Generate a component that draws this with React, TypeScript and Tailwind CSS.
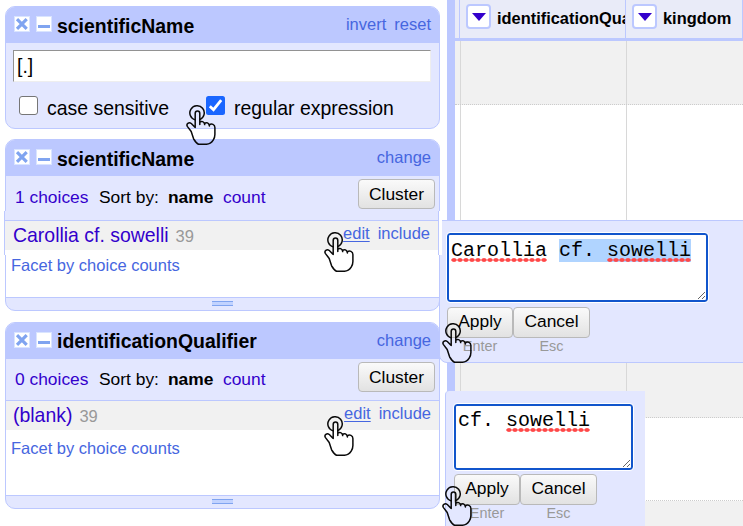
import type { ReactNode } from "react";

function TitleIcon({ kind }: { kind: "close" | "minimize" }) {
  return (
    <svg width="16" height="16" viewBox="0 0 16 16" className="shrink-0">
      <rect x="0.5" y="0.5" width="15" height="15" fill="#fff" stroke="#d9e4ff" />
      {kind === "close" ? (
        <path d="M3 3.2 L12.7 12.8 M12.7 3.2 L3 12.8" stroke="#80a4f0" strokeWidth="3.2" />
      ) : (
        <path d="M2 10.5 H14" stroke="#80a4f0" strokeWidth="2.8" />
      )}
    </svg>
  );
}

function FacetHeader({ title, links, className, titleClass }: { title: string; links: string[]; className: string; titleClass: string }) {
  return (
    <div className={`flex justify-between bg-[#bcc8ff] pl-2 pr-2 ${className}`}>
      <div className="flex">
        <div className="mt-[9px] flex gap-[6px]">
          <TitleIcon kind="close" />
          <TitleIcon kind="minimize" />
        </div>
        <h2 className={`ml-[5px] text-[19.45px] font-bold leading-6 ${titleClass}`}>{title}</h2>
      </div>
      <div className="mt-[6px] flex gap-[8px] text-[16.5px] leading-[22px] text-[#4666e0]">
        {links.map((l) => (
          <a key={l}>{l}</a>
        ))}
      </div>
    </div>
  );
}

function Button({ children, className }: { children: ReactNode; className: string }) {
  return (
    <button
      className={`box-border shrink-0 rounded-[4px] border border-[#b9b9b9] bg-linear-to-b from-[#fafafa] to-[#e2e2e2] text-center text-[17.4px] ${className}`}
    >
      {children}
    </button>
  );
}

type FacetProps = {
  title: string;
  choices: string;
  value: string;
  panelClass: string;
  headerClass: string;
  titleClass: string;
  sortClass: string;
  buttonClass: string;
  rowClass: string;
  footClass: string;
};

function ListFacet(p: FacetProps) {
  return (
    <section className={`flex w-[435px] flex-col overflow-hidden rounded-[10px] border border-[#bcc8ff] bg-[#e3e7ff] ${p.panelClass}`}>
      <FacetHeader title={p.title} links={["change"]} className={p.headerClass} titleClass={p.titleClass} />
      <div className={`flex justify-between border-b border-[#bcc8ff] pl-[9px] pr-[4px] ${p.sortClass}`}>
        <div className="flex text-[17.4px] leading-[22px] text-[#3300cc]">
          <span className="w-[84px]">{p.choices}</span>
          <span className="w-[69px] text-black">Sort by:</span>
          <b className="w-[55px] text-black">name</b>
          <span>count</span>
        </div>
        <Button className={`h-[30px] w-[77px] leading-[28px] ${p.buttonClass}`}>Cluster</Button>
      </div>
      <div className="grow bg-white">
        <div className={`flex h-[29px] justify-between bg-[#f1f1f1] ${p.rowClass}`}>
          <div className="flex items-baseline gap-[7px]">
            <span className="text-[19.45px] leading-7 text-[#3300cc]">{p.value}</span>
            <span className="text-[16.5px] text-[#999]">39</span>
          </div>
          <div className="flex gap-[8px] text-[16.5px] leading-[24px] text-[#4666e0]">
            <a className="underline decoration-1 underline-offset-2">edit</a>
            <a>include</a>
          </div>
        </div>
        <a className={`block pl-[5px] text-[16.5px] leading-5 text-[#4666e0] ${p.footClass}`}>Facet by choice counts</a>
      </div>
      <div className="flex h-[13px] shrink-0 justify-center border-t border-[#bcc8ff] pt-[3px]">
        <div className="h-[5px] w-[21px] border-y border-[#80a4f0] bg-[#c2d3ff]" />
      </div>
    </section>
  );
}

function TextFacet() {
  return (
    <section className="h-[123px] w-[435px] overflow-hidden rounded-[10px] border border-[#bcc8ff] bg-[#e3e7ff]">
      <FacetHeader title="scientificName" links={["invert", "reset"]} className="h-[36px]" titleClass="mt-[7px]" />
      <div className="ml-[7px] mt-[7px] h-[32px] w-[418px] border border-b-[#eee] border-l-[#929292] border-r-[#eee] border-t-[#929292] bg-white pl-[3px] text-[19.45px] leading-[31px]">
        [.]
      </div>
      <div className="ml-[13px] mt-[14px] flex text-[19.45px] leading-[24px]">
        <span className="size-[19px] rounded-[3px] border border-[#767676] bg-white" />
        <span className="ml-[9px] w-[159px]">case sensitive</span>
        <svg width="19" height="19" viewBox="0 0 19 19">
          <rect width="19" height="19" rx="2.5" fill="#1a66ff" />
          <path d="M3.8 10.2 L7.5 13.7 L15.2 4.2" fill="none" stroke="#fff" strokeWidth="2.8" />
        </svg>
        <span className="ml-[9px]">regular expression</span>
      </div>
    </section>
  );
}

function ColumnHead({ name, className }: { name: string; className: string }) {
  return (
    <div className={`flex overflow-hidden border-r border-[#bcc8ff] pl-[6px] pt-[4px] ${className}`}>
      <span className="flex size-[25px] shrink-0 items-center justify-center rounded-[4px] border-2 border-[#bcc8ff] bg-white">
        <svg width="14" height="8" viewBox="0 0 14 8">
          <path d="M0 0H14L7 8Z" fill="#3300cc" />
        </svg>
      </span>
      <b className="ml-[6px] whitespace-nowrap text-[16.4px] leading-[28px]">{name}</b>
    </div>
  );
}

function GridRow({ className }: { className: string }) {
  return (
    <div className={`flex shrink-0 border-b border-dotted border-b-[#ccc] ${className}`}>
      <div className="w-[6px] border-r border-solid border-[#d8d8d8]" />
      <div className="w-[166px] border-r border-solid border-[#d8d8d8]" />
      <div className="grow" />
    </div>
  );
}

function EditorButtons() {
  return (
    <div className="flex text-center text-[14.4px] leading-[17px] text-[#999]">
      <div className="w-[66px]">
        <Button className="block h-[31px] w-[66px] pb-[2px] leading-[27px] text-black">Apply</Button>
        Enter
      </div>
      <div className="w-[77px]">
        <Button className="block h-[31px] w-[77px] pb-[2px] leading-[27px] text-black">Cancel</Button>
        Esc
      </div>
    </div>
  );
}

function EditorBox({ children, className }: { children: ReactNode; className: string }) {
  return (
    <div
      className={`relative box-border whitespace-pre rounded-[3px] border-2 border-[#1155cc] bg-white font-['Liberation_Mono',monospace] text-[20px] leading-[23px] outline outline-white ${className}`}
    >
      {children}
      <svg className="absolute bottom-0 right-0" width="9" height="9" viewBox="0 0 9 9">
        <path d="M1 8L8 1M5 8L8 5" stroke="#666" strokeWidth="1" />
      </svg>
    </div>
  );
}

function Misspelled({ children }: { children: string }) {
  return (
    <span className="relative">
      {children}
      <span className="absolute bottom-0 left-0 h-[4px] w-full bg-[radial-gradient(ellipse_at_center,#ff4848_50%,transparent_80%)] bg-[length:6px_4px]" />
    </span>
  );
}

function Pointer({ className }: { className: string }) {
  return (
    <svg className={`absolute ${className}`} width="31" height="41" viewBox="0 0 31 41" fill="none" stroke="#0a0a0a" strokeWidth="1.5" strokeLinejoin="round" strokeLinecap="round">
      <path d="M9.2 14.9A7.2 7.2 0 1 1 13.8 14.6" />
      <path d="M9.2 22.5V8.4C9.2 5.2 13.8 5.2 13.8 8.4V19.5M13.8 17.2C15.4 15.7 18.2 16.5 18.7 19.6M18.7 18.4C20.3 16.9 23 17.8 23.4 20.9M23.4 19.8C25.6 18.2 28.9 19.5 28.9 22.4V29.5C28.9 32 28.2 33.6 27.2 35.2C25.4 38 23 39.2 20.5 39.2H12.6C10.2 38.5 9 36.2 7.6 33.8L5.2 26.5L1.5 21.6C-.3 18.8 3 16.6 5.3 18.5L9.2 22.5" />
    </svg>
  );
}

export default function App() {
  return (
    <main className="relative flex h-[526px] w-[743px] overflow-hidden bg-white font-['Liberation_Sans',Arial,sans-serif] text-black">
      <aside className="flex w-[447px] shrink-0 flex-col pl-[5px] pt-[6px]">
        <TextFacet />
        <ListFacet
          title="scientificName"
          choices="1 choices"
          value="Carollia cf. sowelli"
          panelClass="mt-[10px] h-[172px]"
          headerClass="h-[36px]"
          titleClass="mt-[7px]"
          sortClass="h-[45px] pt-[10px]"
          buttonClass="mt-[-7px]"
          rowClass="pl-[7px] pr-[9px]"
          footClass="mt-[5px]"
        />
        <ListFacet
          title="identificationQualifier"
          choices="0 choices"
          value="(blank)"
          panelClass="mt-[11px] h-[187px]"
          headerClass="h-[36px]"
          titleClass="mt-[6px]"
          sortClass="h-[42px] pt-[9px]"
          buttonClass="mt-[-6px]"
          rowClass="pl-[7px] pr-[8px]"
          footClass="mt-[8px]"
        />
      </aside>
      <div className="w-[8px] shrink-0 bg-[#bcc8ff]" />
      <section className="flex grow flex-col">
        <div className="flex h-[41px] shrink-0 border-b-[3px] border-[#bcc8ff] bg-[#e9ebf8]">
          <div className="w-[5px] border-r border-[#bcc8ff]" />
          <ColumnHead name="identificationQualifier" className="w-[166px]" />
          <ColumnHead name="kingdom" className="w-[117px]" />
        </div>
        <GridRow className="h-[64px] bg-[#f1f1f1]" />
        <GridRow className="h-[200px] bg-white" />
        <GridRow className="h-[113px] bg-[#f1f1f1]" />
        <GridRow className="h-[83px] bg-white" />
        <GridRow className="h-[40px] bg-[#f1f1f1]" />
      </section>

      {/* Stepped edges where the value row and its editor overlap the facet */}
      <div className="absolute left-[4px] top-[211px] h-[44px] w-px bg-[#bcc8ff]" />
      <div className="absolute left-[5px] top-[211px] h-[9px] w-px bg-[#e3e7ff]" />
      <div className="absolute left-[5px] top-[221px] h-[29px] w-px bg-[#f1f1f1]" />
      <div className="absolute left-[5px] top-[250px] h-[5px] w-px bg-white" />

      <div className="absolute left-[439px] top-[220px] h-[143px] w-[310px] rounded-bl-[8px] border border-[#bcc8ff] bg-[#e3e7ff] pl-[7px] pt-[12px]">
        <EditorBox className="h-[69px] w-[261px] pl-[2px] pt-[4px]">
          <Misspelled>Carollia</Misspelled> <span className="bg-[#b0d4ff]">cf. <Misspelled>sowelli</Misspelled></span>
        </EditorBox>
        <div className="mt-[5px]">
          <EditorButtons />
        </div>
      </div>
      <div className="absolute left-[438px] top-[211px] h-[44px] w-[4px] border-l border-[#bcc8ff] bg-white" />

      <div className="absolute left-[445px] top-[391px] h-[140px] w-[200px] rounded-tl-[4px] border-l border-[#bcc8ff] bg-[#e3e7ff] pl-[8px] pt-[13px]">
        <EditorBox className="h-[66px] w-[179px] pl-[2px] pt-[3px]">
          cf. <Misspelled>sowelli</Misspelled>
        </EditorBox>
        <div className="mt-[4px]">
          <EditorButtons />
        </div>
      </div>

      <Pointer className="left-[186px] top-[105px]" />
      <Pointer className="left-[324px] top-[232px]" />
      <Pointer className="left-[324px] top-[416px]" />
      <Pointer className="left-[442px] top-[323px]" />
      <Pointer className="left-[442px] top-[486px]" />
    </main>
  );
}
